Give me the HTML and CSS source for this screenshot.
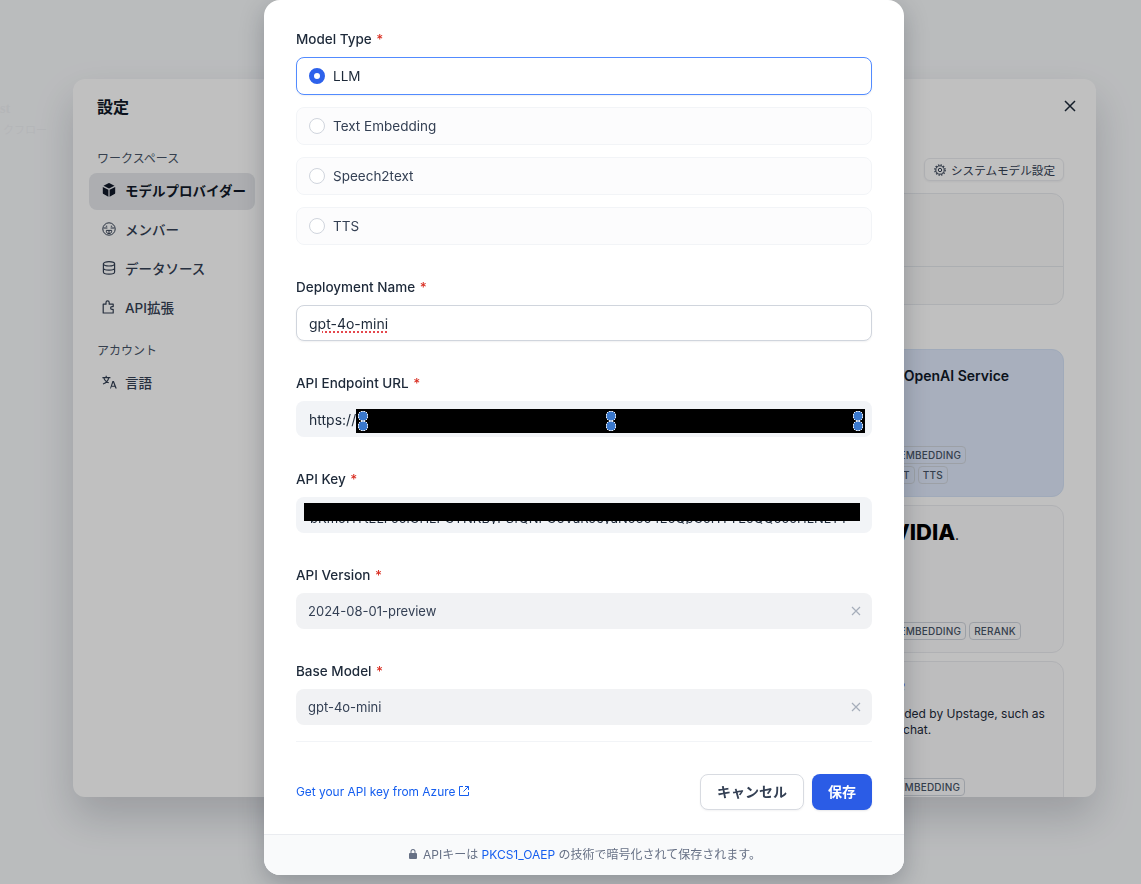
FILE: index.html
```html
<!DOCTYPE html>
<html lang="ja">
<head>
    <meta charset="UTF-8">
    <meta name="viewport" content="width=device-width, initial-scale=1.0">
    <title>Model Provider</title>
    <link rel="stylesheet" href="styles.css">
</head>
<body>
    <!-- Page behind the dialogs -->
    <div class="page-behind">
        <div class="page-name">st</div>
        <div class="page-kind">クフロー</div>
    </div>

    <!-- Settings dialog -->
    <div class="settings">
        <aside class="side">
            <h2 class="side-title">設定</h2>
            <div class="side-group">ワークスペース</div>
            <div class="side-item active">
                <svg viewBox="0 0 16 16" class="side-icon"><path fill="currentColor" d="M7.4 1.2a1.3 1.3 0 0 1 1.2 0l4.9 2.5-5.5 2.9-5.5-2.9zM1.8 4.9l5.6 2.9v6.9l-4.9-2.6a1.3 1.3 0 0 1-.7-1.1zM14.2 4.9v6.1a1.3 1.3 0 0 1-.7 1.1l-4.9 2.6V7.8z"/></svg>
                モデルプロバイダー
            </div>
            <div class="side-item">
                <svg viewBox="0 0 16 16" class="side-icon" fill="none" stroke="currentColor" stroke-width="1"><circle cx="8" cy="8" r="6.2"/><path d="M2.6 7h3.8M9.6 7h3.8M5.4 9.4h5.2v1.2c0 1.2-1.2 2-2.6 2s-2.6-.8-2.6-2zM8 9.4v3"/><path d="M4.8 5.2h1.4M9.8 5.2h1.4"/></svg>
                メンバー
            </div>
            <div class="side-item">
                <svg viewBox="0 0 16 16" class="side-icon" fill="none" stroke="currentColor" stroke-width="1.2"><ellipse cx="8" cy="3.8" rx="5.6" ry="2.2"/><path d="M2.4 3.8v8.2c0 1.2 2.5 2.2 5.6 2.2s5.6-1 5.6-2.2V3.8M2.4 8c0 1.2 2.5 2.2 5.6 2.2s5.6-1 5.6-2.2"/></svg>
                データソース
            </div>
            <div class="side-item">
                <svg viewBox="0 0 16 16" class="side-icon" fill="none" stroke="currentColor" stroke-width="1.2" stroke-linejoin="round"><path d="M2.2 14V5.2h2.8V3.4a1.6 1.6 0 0 1 3.2 0v1.8h4v2.4h-1.2a1.3 1.3 0 0 0 0 2.8h1.2V14z"/></svg>
                API拡張
            </div>
            <div class="side-group account">アカウント</div>
            <div class="side-item">
                <svg viewBox="0 0 16 16" class="side-icon" fill="none" stroke="currentColor" stroke-width="1.2"><path d="M1.4 3.6h8M5.2 1.8v1.8M7.8 3.6c-.6 3-2.6 5.2-5.8 6.4M2.8 3.6c.7 2.6 2.6 4.4 5 5.2"/><path fill="currentColor" stroke="none" d="M11.4 7h1.5l2.9 7.6h-1.4l-.7-1.8h-3.1l-.7 1.8H9zm-.4 4.7h2.3l-1.1-3.2z"/></svg>
                言語
            </div>
        </aside>
        <main class="main">
            <div class="main-close">
                <svg viewBox="0 0 16 16" class="close-icon" fill="none" stroke="currentColor" stroke-width="1.5"><path d="M3 3l10 10M13 3L3 13"/></svg>
            </div>
            <div class="main-toolbar">
                <div class="system-button">
                    <svg viewBox="0 0 14 14" class="gear-icon" fill="none" stroke="currentColor"><circle cx="7" cy="7" r="1.7" stroke-width="1"/><circle cx="7" cy="7" r="4.2" stroke-width="1"/><circle cx="7" cy="7" r="5.2" stroke-width="1.2" stroke-dasharray="1.36 1.36"/></svg>
                    システムモデル設定
                </div>
            </div>
            <div class="notice-panel">
                <div class="notice-top"></div>
                <div class="notice-bottom"></div>
            </div>
            <div class="card azure">
                <div class="card-name">Azure OpenAI Service</div>
                <div class="card-tags">
                    <span class="tag">LLM</span>
                    <span class="tag">Text Embedding</span>
                    <span class="tag">Speech2text</span>
                    <span class="tag">TTS</span>
                </div>
            </div>
            <div class="card nvidia">
                <div class="card-logo">NVIDIA<small>.</small></div>
                <div class="card-tags">
                    <span class="tag">LLM</span>
                    <span class="tag">Text Embedding</span>
                    <span class="tag">Rerank</span>
                </div>
            </div>
            <div class="card upstage">
                <div class="card-brand">upstage</div>
                <div class="card-desc">Models provided by Upstage, such as<br>solar-1-mini-chat.</div>
                <div class="card-tags">
                    <span class="tag">Text Embedding</span>
                </div>
            </div>
        </main>
    </div>

    <div class="overlay"></div>

    <!-- Add model modal -->
    <div class="modal">
        <div class="modal-body">
            <div class="field">
                <div class="label">Model Type <span class="req">*</span></div>
                <div class="radio-list">
                    <div class="radio-row checked"><span class="radio"></span>LLM</div>
                    <div class="radio-row"><span class="radio"></span>Text Embedding</div>
                    <div class="radio-row"><span class="radio"></span>Speech2text</div>
                    <div class="radio-row"><span class="radio"></span>TTS</div>
                </div>
            </div>

            <div class="field">
                <div class="label">Deployment Name <span class="req">*</span></div>
                <div class="input focused"><span class="spell">gpt-4o-mini</span></div>
            </div>

            <div class="field">
                <div class="label">API Endpoint URL <span class="req">*</span></div>
                <div class="input filled">
                    <span class="url-scheme">https://</span>
                    <div class="mask url-mask">
                        <span class="handle h1"></span>
                        <span class="handle h2"></span>
                        <span class="handle h3"></span>
                    </div>
                </div>
            </div>

            <div class="field">
                <div class="label">API Key <span class="req">*</span></div>
                <div class="input filled">
                    <div class="key-strip">
                        <span class="key-text">bKmoHYtELFoolGHLPGYNKByPSfQNPG6VaRoeyaNo6o4EoQpGoHYYEoQQoooHLNLYY</span>
                        <div class="mask key-mask"></div>
                    </div>
                </div>
            </div>

            <div class="field">
                <div class="label">API Version <span class="req">*</span></div>
                <div class="input select">
                    <span>2024-08-01-preview</span>
                    <svg viewBox="0 0 12 12" class="clear-icon" fill="none" stroke="currentColor" stroke-width="1.2"><path d="M2 2l8 8M10 2l-8 8"/></svg>
                </div>
            </div>

            <div class="field last">
                <div class="label">Base Model <span class="req">*</span></div>
                <div class="input select">
                    <span>gpt-4o-mini</span>
                    <svg viewBox="0 0 12 12" class="clear-icon" fill="none" stroke="currentColor" stroke-width="1.2"><path d="M2 2l8 8M10 2l-8 8"/></svg>
                </div>
            </div>

            <div class="divider"></div>

            <div class="actions">
                <a class="help-link">
                    Get your API key from Azure
                    <svg viewBox="0 0 12 12" class="link-icon" fill="none" stroke="currentColor" stroke-width="1"><path d="M5 1.5H1.5v9h9V7M7 1.5h3.5V5M10.5 1.5L5.5 6.5"/></svg>
                </a>
                <div class="buttons">
                    <button class="btn cancel">キャンセル</button>
                    <button class="btn save">保存</button>
                </div>
            </div>
        </div>
        <div class="modal-footer">
            <svg viewBox="0 0 12 12" class="lock-icon"><path fill="currentColor" d="M3.5 5V3.5a2.5 2.5 0 0 1 5 0V5h.5a1 1 0 0 1 1 1v4a1 1 0 0 1-1 1H3a1 1 0 0 1-1-1V6a1 1 0 0 1 1-1zm1 0h3V3.5a1.5 1.5 0 0 0-3 0z"/></svg>
            <span>APIキーは <a class="footer-link">PKCS1_OAEP</a> の技術で暗号化されて保存されます。</span>
        </div>
    </div>
</body>
</html>
```

FILE: styles.css
```css
* {
    box-sizing: border-box;
}

html, body {
    height: 100%;
}

body {
    margin: 0;
    overflow: hidden;
    background-color: #f8fafc;
    color: #101828;
    font-family: Inter, "Noto Sans CJK JP", sans-serif;
    font-size: 14px;
}

.page-behind {
    position: absolute;
    left: 0;
    top: 101px;
    color: #f0f2f5;
}

.page-name {
    font-family: "Liberation Serif", serif;
    font-size: 14px;
    font-weight: 600;
}

.page-kind {
    font-size: 11px;
    margin-top: 4px;
    padding-left: 3px;
}

.overlay {
    position: fixed;
    inset: 0;
    background-color: rgba(0, 0, 0, 0.247);
}

/* settings dialog */
.settings {
    position: absolute;
    left: 73px;
    top: 79px;
    width: 1023px;
    height: 718px;
    background-color: #fff;
    border-radius: 12px;
    overflow: hidden;
    display: flex;
    box-shadow: 0 20px 40px rgba(16, 24, 40, 0.18);
}

.side {
    width: 198px;
    flex: none;
    padding: 16px 16px 0;
}

.side-title {
    margin: 0 0 29px 8px;
    font-size: 16px;
    line-height: 24px;
    font-weight: 600;
    color: #101828;
}

.side-group {
    margin-left: 8px;
    margin-bottom: 3px;
    font-size: 12px;
    line-height: 22px;
    color: #475467;
}

.side-group.account {
    margin-top: 13px;
}

.side-item {
    display: flex;
    align-items: center;
    gap: 8px;
    height: 37px;
    margin-bottom: 2px;
    padding-left: 12px;
    padding-bottom: 3px;
    border-radius: 8px;
    font-size: 13.5px;
    font-weight: 500;
    color: #344054;
    width: 166px;
    white-space: nowrap;
}

.side-item.active {
    background-color: #e6e8ec;
    color: #101828;
    font-weight: 700;
}

.side-icon {
    width: 16px;
    height: 16px;
    flex: none;
}

.main {
    flex: 1;
    display: flex;
    flex-direction: column;
    align-items: flex-end;
    padding-right: 32px;
}

.main-close {
    flex: none;
    height: 79px;
    margin-right: -14px;
    padding-top: 19px;
    color: #1d2939;
}

.close-icon {
    display: block;
    width: 16px;
    height: 16px;
}

.main-toolbar {
    flex: none;
    height: 35px;
}

.system-button {
    display: flex;
    align-items: center;
    gap: 4px;
    height: 23px;
    padding: 0 8px;
    background-color: #fff;
    border: 1px solid #eaecf0;
    border-radius: 6px;
    font-size: 11.6px;
    font-weight: 400;
    color: #344054;
    box-shadow: 0 1px 2px rgba(16, 24, 40, 0.05);
}

.gear-icon {
    width: 14px;
    height: 14px;
}

.notice-panel {
    flex: none;
    width: 400px;
    height: 112px;
    border: 1px solid #e8eaee;
    border-radius: 12px;
    background-color: #fafafa;
    margin-bottom: 44px;
}

.notice-top {
    height: 73px;
    border-bottom: 1px solid #e4e7ec;
}

.card {
    flex: none;
    width: 250px;
    height: 148px;
    margin-bottom: 8px;
    padding: 16px 16px 12px;
    background-color: #fcfcfd;
    border: 1px solid #eaecf0;
    border-radius: 12px;
    display: flex;
    flex-direction: column;
}

.card.azure {
    background-color: #dfe9fb;
    border-color: #d5e2f7;
}

.card.upstage {
    height: 180px;
}

.card-name {
    padding-left: 29px;
    font-size: 14px;
    line-height: 20px;
    font-weight: 600;
    white-space: nowrap;
}

.card-logo {
    margin-top: -2px;
    padding-left: 45px;
    font-size: 22px;
    line-height: 24px;
    font-weight: 800;
    color: #000;
    white-space: nowrap;
}

.card-logo small {
    font-size: 10px;
}

.card-brand {
    margin-top: -4px;
    padding-left: 4px;
    font-size: 18px;
    line-height: 24px;
    font-weight: 500;
    font-style: italic;
    color: #6a35ff;
}

.card-desc {
    margin-top: 8px;
    font-size: 12px;
    line-height: 16px;
    color: #1d2939;
    white-space: nowrap;
}

.card-tags {
    margin-top: auto;
    display: flex;
    flex-wrap: wrap;
    gap: 2px 3px;
}

.card.upstage .card-tags {
    margin-top: 40px;
    padding-left: 33px;
}

.tag {
    height: 18px;
    padding: 0 4px;
    border: 1px solid #d0d5dd;
    border-radius: 4px;
    font-size: 10px;
    line-height: 16px;
    font-weight: 500;
    letter-spacing: 0.2px;
    color: #475467;
    text-transform: uppercase;
    white-space: nowrap;
}

/* add model modal */
.modal {
    position: absolute;
    left: 264px;
    top: 0;
    width: 640px;
    height: 875px;
    background-color: #fff;
    border-radius: 16px;
    overflow: hidden;
    box-shadow: 0 8px 24px rgba(16, 24, 40, 0.25);
}

.modal-body {
    padding: 29px 32px 24px;
}

.field {
    margin-bottom: 32px;
}

.field.last {
    margin-bottom: 16px;
}

.label {
    font-size: 13.5px;
    line-height: 20px;
    font-weight: 500;
    color: #1d2939;
    margin-bottom: 8px;
}

.req {
    color: #d92d20;
    margin-left: 1px;
}

.radio-list {
    display: flex;
    flex-direction: column;
    gap: 12px;
}

.radio-row {
    display: flex;
    align-items: center;
    height: 38px;
    padding-left: 12px;
    background-color: #fcfcfd;
    border: 1px solid #f2f4f7;
    border-radius: 8px;
    font-size: 13.5px;
    color: #344054;
}

.radio-row.checked {
    background-color: #fff;
    border-color: #528bff;
    color: #1d2939;
    box-shadow: 0 1px 2px rgba(16, 24, 40, 0.06);
}

.radio {
    width: 16px;
    height: 16px;
    margin-right: 8px;
    border: 1px solid #d0d5dd;
    border-radius: 50%;
    background-color: #fff;
}

.radio-row.checked .radio {
    border: 5px solid #2e62eb;
}

.input {
    display: flex;
    align-items: center;
    height: 36px;
    padding: 0 12px;
    border-radius: 8px;
    background-color: #f2f4f7;
    font-size: 14px;
    color: #1d2939;
}

.input.focused {
    background-color: #fff;
    border: 1px solid #d0d5dd;
    box-shadow: 0 1px 2px rgba(16, 24, 40, 0.06);
}

.input.select {
    justify-content: space-between;
    padding-right: 10px;
    background-color: #f1f2f4;
    font-size: 13px;
    color: #344054;
}

.spell {
    text-decoration: underline dotted #e5484d 1.5px;
    text-underline-offset: 3px;
}

.url-scheme {
    margin-left: 1px;
}

.mask {
    background-color: #000;
}

.url-mask {
    position: relative;
    flex: none;
    align-self: flex-start;
    width: 509px;
    height: 24px;
    margin-top: 8px;
}

/* selection handles left on the screenshot */
.handle {
    position: absolute;
    top: 2px;
    width: 10px;
    height: 20px;
    background:
        radial-gradient(circle at 5px 5px, #3a78cc 4.4px, #e8eef8 4.6px, #e8eef8 5px, transparent 5.2px),
        radial-gradient(circle at 5px 15px, #3a78cc 4.4px, #e8eef8 4.6px, #e8eef8 5px, transparent 5.2px);
}

.h1 { left: 2px; }
.h2 { left: 250px; }
.h3 { left: 497px; }

.key-strip {
    position: relative;
    align-self: flex-start;
    flex: none;
    width: 556px;
    height: 21px;
    margin-left: -4px;
    margin-top: 6px;
    overflow: hidden;
}

.key-text {
    position: absolute;
    left: 6px;
    bottom: -2px;
    font-size: 13px;
    line-height: 16px;
    color: #1d2939;
    white-space: nowrap;
}

.key-mask {
    position: absolute;
    left: 0;
    top: 0;
    right: 0;
    height: 18px;
}

.clear-icon {
    width: 12px;
    height: 12px;
    color: #a6aeba;
}

.divider {
    height: 1px;
    background-color: #f2f4f7;
    margin-bottom: 32px;
}

.actions {
    display: flex;
    align-items: center;
    justify-content: space-between;
}

.help-link {
    display: flex;
    align-items: center;
    gap: 3px;
    margin-top: -2px;
    font-size: 11.9px;
    color: #155eef;
}

.link-icon {
    width: 12px;
    height: 12px;
}

.buttons {
    display: flex;
    gap: 8px;
}

.btn {
    height: 36px;
    padding-bottom: 3px;
    border-radius: 8px;
    font-family: inherit;
    font-size: 14px;
    font-weight: 600;
}

.cancel {
    width: 104px;
    background-color: #fff;
    border: 1px solid #d8dbe1;
    color: #344054;
    box-shadow: 0 1px 2px rgba(16, 24, 40, 0.05);
}

.save {
    width: 60px;
    background-color: #2b5ce6;
    border: none;
    color: #fff;
    box-shadow: 0 1px 2px rgba(16, 24, 40, 0.1);
}

.modal-footer {
    display: flex;
    align-items: center;
    justify-content: center;
    height: 41px;
    padding-bottom: 3px;
    background-color: #f9fafb;
    border-top: 1px solid #eaecf0;
    font-size: 12px;
    color: #667085;
}

.lock-icon {
    width: 12px;
    height: 12px;
    margin-right: 4px;
    color: #667085;
}

.footer-link {
    color: #155eef;
}
```
